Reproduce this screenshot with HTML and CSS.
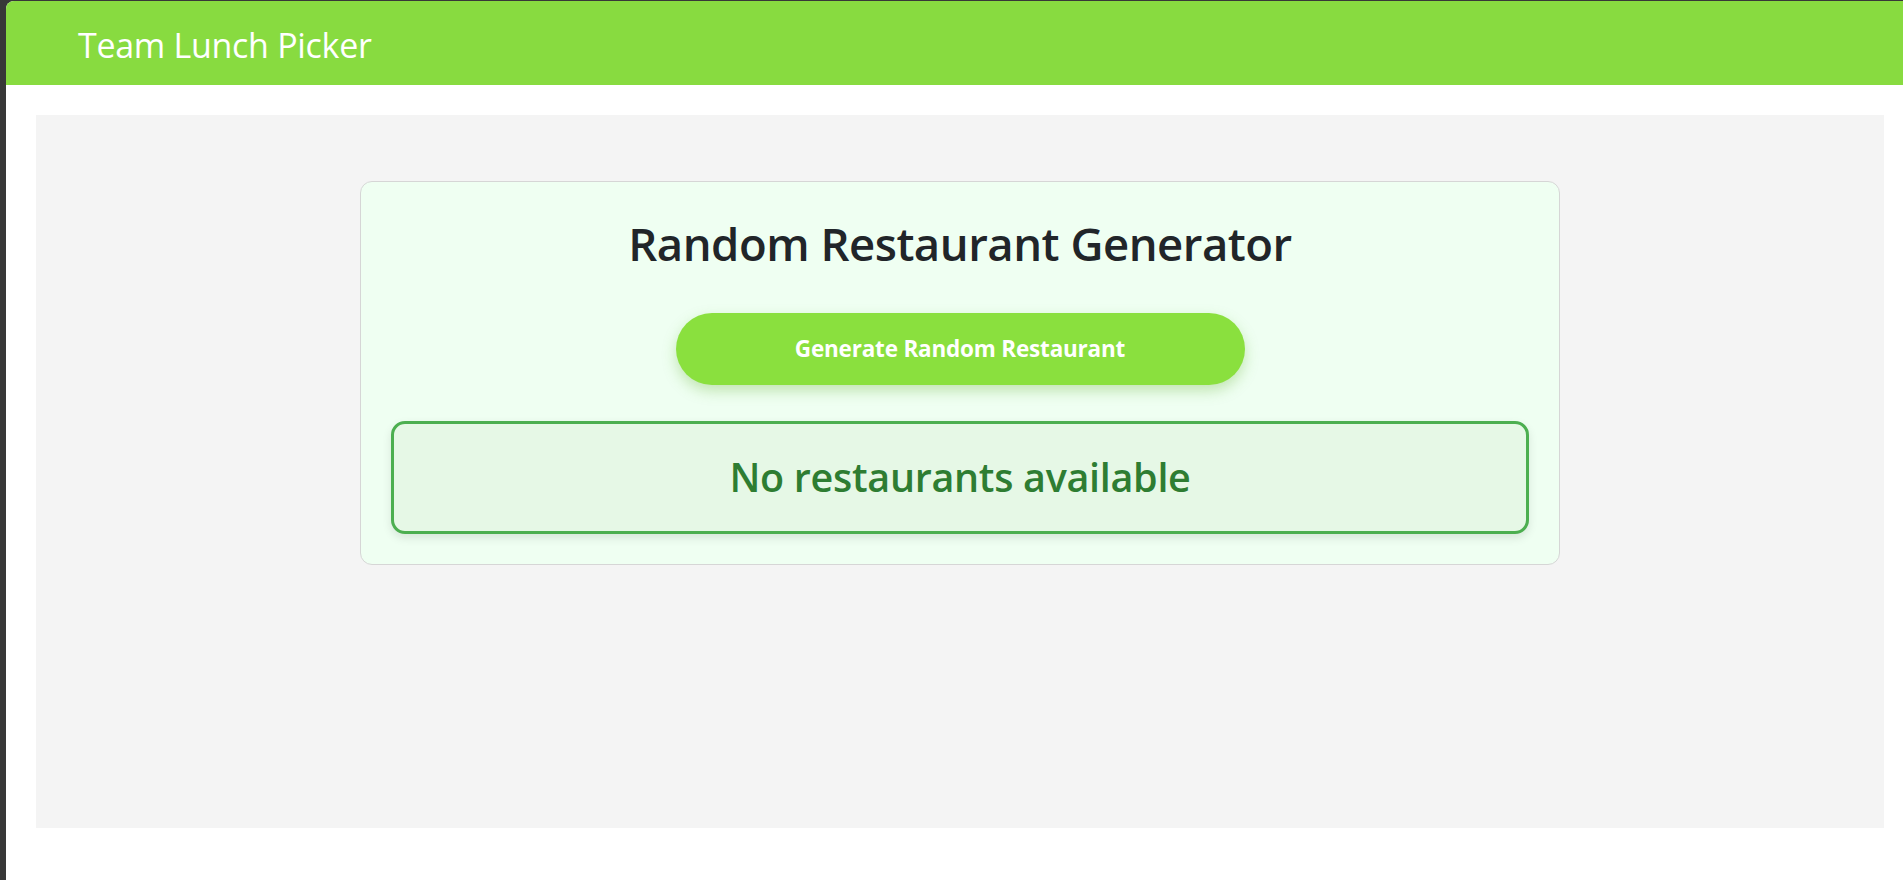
FILE: index.html
```html
<!DOCTYPE html>
<html lang="en">
<head>
<meta charset="utf-8">
<title>Team Lunch Picker</title>
<link rel="stylesheet" href="styles.css">
</head>
<body>
<div class="window">
  <header class="topbar">
    <span class="brand">Team Lunch Picker</span>
  </header>
  <main class="stage">
    <section class="card">
      <h1 class="card-title">Random Restaurant Generator</h1>
      <button class="gen-btn" type="button">Generate Random Restaurant</button>
      <div class="result">No restaurants available</div>
    </section>
  </main>
</div>
</body>
</html>
```
FILE: styles.css
```css
html, body {
  margin: 0;
  padding: 0;
}
body {
  background: #383838;
  font-family: "Open Sans", "Noto Sans", sans-serif;
  height: 880px;
  overflow: hidden;
}
.window {
  margin: 1px 0 0 6px;
  height: 879px;
  background: #ffffff;
  border-top-left-radius: 8px;
  overflow: hidden;
}
.topbar {
  height: 84px;
  box-sizing: border-box;
  background: #88db40;
  display: flex;
  align-items: center;
  padding: 4px 0 0 72px;
}
.brand {
  color: #ffffff;
  font-size: 34px;
  font-weight: 400;
  line-height: 1;
  letter-spacing: -0.3px;
}
.stage {
  margin: 30px 19px 0 30px;
  height: 713px;
  background: #f4f4f4;
  padding-top: 66px;
  box-sizing: border-box;
}
.card {
  width: 1200px;
  box-sizing: border-box;
  margin: 0 auto;
  background: #effff2;
  border: 1px solid #d6d6d6;
  border-radius: 12px;
  padding: 34px 30px 30px;
  display: flex;
  flex-direction: column;
  align-items: center;
}
.card-title {
  margin: 0;
  font-size: 45.5px;
  font-weight: 600;
  line-height: 1.2;
  color: #212529;
  letter-spacing: -0.5px;
}
.gen-btn {
  margin-top: 42px;
  width: 569px;
  height: 72px;
  border: none;
  border-radius: 36px;
  background: #8ae03e;
  color: #ffffff;
  font-family: inherit;
  font-size: 22.5px;
  font-weight: 700;
  letter-spacing: -0.2px;
  box-shadow: 0 6px 14px rgba(110, 180, 60, 0.35);
}
.result {
  margin-top: 36px;
  align-self: stretch;
  height: 113px;
  box-sizing: border-box;
  border: 3px solid #4caf50;
  border-radius: 14px;
  background: #e6f8e6;
  color: #2e7d32;
  font-size: 39.5px;
  font-weight: 600;
  letter-spacing: -0.3px;
  display: flex;
  align-items: center;
  justify-content: center;
  box-shadow: 0 4px 10px rgba(0, 0, 0, 0.1);
}
```
